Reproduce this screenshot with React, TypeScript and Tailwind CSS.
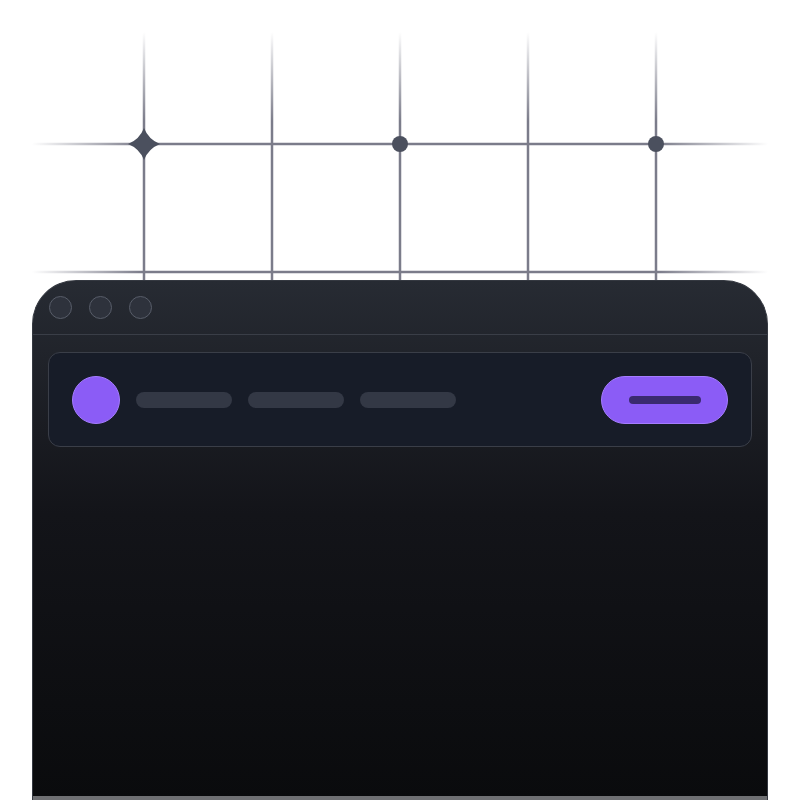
import React from 'react';

const COLS = [144, 272, 400, 528, 656];
const ROWS = [144, 272];

// grid drawing behind the window
const GridBackdrop = () => (
  <svg className="absolute inset-0" width="800" height="800" viewBox="0 0 800 800">
    <defs>
      <linearGradient id="vfade" x1="0" y1="32" x2="0" y2="280" gradientUnits="userSpaceOnUse">
        <stop offset="0" stopColor="#7b7c8a" stopOpacity="0" />
        <stop offset="0.36" stopColor="#7b7c8a" stopOpacity="1" />
        <stop offset="1" stopColor="#7b7c8a" stopOpacity="1" />
      </linearGradient>
      <linearGradient id="hfade" x1="32" y1="0" x2="768" y2="0" gradientUnits="userSpaceOnUse">
        <stop offset="0" stopColor="#7b7c8a" stopOpacity="0" />
        <stop offset="0.15" stopColor="#7b7c8a" stopOpacity="1" />
        <stop offset="0.85" stopColor="#7b7c8a" stopOpacity="1" />
        <stop offset="1" stopColor="#7b7c8a" stopOpacity="0" />
      </linearGradient>
    </defs>
    {ROWS.map((y) => (
      <rect key={y} x="32" y={y - 1.25} width="736" height="2.5" fill="url(#hfade)" />
    ))}
    {COLS.map((x) => (
      <rect key={x} x={x - 1.25} y="32" width="2.5" height="250" fill="url(#vfade)" />
    ))}
    <path
      d="M144 128 Q148.5 139.5 160 144 Q148.5 148.5 144 160 Q139.5 148.5 128 144 Q139.5 139.5 144 128 Z"
      fill="#4b505e"
    />
    <circle cx="400" cy="144" r="8" fill="#4b505e" />
    <circle cx="656" cy="144" r="8" fill="#4b505e" />
  </svg>
);

const Pill = () => <div className="h-4 w-24 rounded-full bg-[#333845]" />;

const Dot = () => (
  <div className="h-[23px] w-[23px] rounded-full border-[1.5px] border-[#585d69] bg-[#2e323c]" />
);

export default function App() {
  return (
    <div className="relative h-[800px] w-[800px] overflow-hidden bg-white">
      <GridBackdrop />
      <div className="relative px-8 pt-[280px]">
        <div className="flex h-[520px] flex-col rounded-t-[44px] border border-b-0 border-[#353941] bg-gradient-to-b from-[#272b33] via-[#131419] via-45% to-[#0a0b0d]">
          <div className="flex h-[54px] items-center gap-[17px] border-b border-[#3a3e47] pl-[16px]">
            <Dot />
            <Dot />
            <Dot />
          </div>
          <div className="flex-1 px-[15px] pt-[17px]">
            <div className="flex h-[95px] items-center rounded-xl border border-[#3a3e48] bg-[#171c28] pl-[23px] pr-[23px]">
              <div className="h-12 w-12 rounded-full border border-[#a57cff] bg-[#8b5cf6]" />
              <div className="ml-4 flex gap-4">
                <Pill />
                <Pill />
                <Pill />
              </div>
              <div className="ml-auto flex h-12 w-[127px] items-center justify-center rounded-full border border-[#a57cff] bg-[#8b5cf6]">
                <div className="h-2 w-[72px] rounded-full bg-[#3b2a70]" />
              </div>
            </div>
          </div>
          <div className="h-[4px] bg-[#6f7073]" />
        </div>
      </div>
    </div>
  );
}
